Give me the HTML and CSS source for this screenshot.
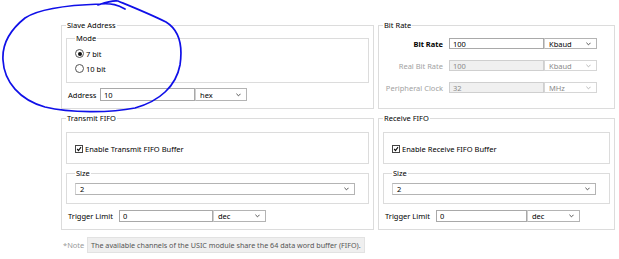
FILE: index.html
```html
<!DOCTYPE html>
<html lang="en">
<head>
    <meta charset="UTF-8">
    <title>USIC I2C Configuration</title>
    <link rel="stylesheet" href="styles.css">
</head>
<body>
    <div class="config">
        <!-- Slave address -->
        <fieldset class="group">
            <legend>Slave Address</legend>
            <fieldset class="mode">
                <legend>Mode</legend>
                <label class="radio-row"><span class="radio checked"></span>7 bit</label>
                <label class="radio-row"><span class="radio"></span>10 bit</label>
            </fieldset>
            <div class="row address-row">
                <span class="label address-label">Address</span>
                <input class="text-input address-input" type="text" value="10">
                <div class="select address-select"><span>hex</span><svg class="chevron" viewBox="0 0 6 4"><path d="M0.5 0.5 L3 3 L5.5 0.5"/></svg></div>
            </div>
        </fieldset>

        <!-- Bit rate -->
        <fieldset class="group">
            <legend>Bit Rate</legend>
            <div class="rate-rows">
                <div class="row">
                    <span class="label rate-label strong">Bit Rate</span>
                    <input class="text-input rate-input" type="text" value="100">
                    <div class="select rate-select"><span>Kbaud</span><svg class="chevron" viewBox="0 0 6 4"><path d="M0.5 0.5 L3 3 L5.5 0.5"/></svg></div>
                </div>
                <div class="row disabled">
                    <span class="label rate-label">Real Bit Rate</span>
                    <input class="text-input rate-input" type="text" value="100" disabled>
                    <div class="select rate-select"><span>Kbaud</span><svg class="chevron" viewBox="0 0 6 4"><path d="M0.5 0.5 L3 3 L5.5 0.5"/></svg></div>
                </div>
                <div class="row disabled">
                    <span class="label rate-label">Peripheral Clock</span>
                    <input class="text-input rate-input" type="text" value="32" disabled>
                    <div class="select rate-select"><span>MHz</span><svg class="chevron" viewBox="0 0 6 4"><path d="M0.5 0.5 L3 3 L5.5 0.5"/></svg></div>
                </div>
            </div>
        </fieldset>

        <!-- Transmit FIFO -->
        <fieldset class="group">
            <legend>Transmit FIFO</legend>
            <div class="check-box">
                <label class="check-row"><span class="checkbox"><svg viewBox="0 0 8 8"><path d="M1.5 4 L3.3 6 L6.7 1.6"/></svg></span>Enable Transmit FIFO Buffer</label>
            </div>
            <fieldset class="size">
                <legend>Size</legend>
                <div class="select size-select"><span>2</span><svg class="chevron" viewBox="0 0 6 4"><path d="M0.5 0.5 L3 3 L5.5 0.5"/></svg></div>
            </fieldset>
            <div class="row trigger-row">
                <span class="label trigger-label">Trigger Limit</span>
                <input class="text-input trigger-input" type="text" value="0">
                <div class="select trigger-select"><span>dec</span><svg class="chevron" viewBox="0 0 6 4"><path d="M0.5 0.5 L3 3 L5.5 0.5"/></svg></div>
            </div>
        </fieldset>

        <!-- Receive FIFO -->
        <fieldset class="group">
            <legend>Receive FIFO</legend>
            <div class="check-box">
                <label class="check-row"><span class="checkbox"><svg viewBox="0 0 8 8"><path d="M1.5 4 L3.3 6 L6.7 1.6"/></svg></span>Enable Receive FIFO Buffer</label>
            </div>
            <fieldset class="size">
                <legend>Size</legend>
                <div class="select size-select"><span>2</span><svg class="chevron" viewBox="0 0 6 4"><path d="M0.5 0.5 L3 3 L5.5 0.5"/></svg></div>
            </fieldset>
            <div class="row trigger-row">
                <span class="label trigger-label">Trigger Limit</span>
                <input class="text-input trigger-input rx" type="text" value="0">
                <div class="select trigger-select"><span>dec</span><svg class="chevron" viewBox="0 0 6 4"><path d="M0.5 0.5 L3 3 L5.5 0.5"/></svg></div>
            </div>
        </fieldset>

        <div class="note">
            <span class="note-label">*Note</span>
            <span class="note-text">The available channels of the USIC module share the 64 data word buffer (FIFO).</span>
        </div>
    </div>

    <!-- hand drawn marker loop over the slave address group -->
    <svg class="marker" width="200" height="120" viewBox="0 0 200 120">
        <path d="M125 9 C118 5 112 3 100 4 C70 5 40 8 25 18 C10 30 2 45 3 60 C4 82 20 100 45 107 C70 113 110 113 135 108 C160 101 176 86 180 65 C183 45 179 30 166 22 C150 14 135 8 118 1 C112 0 104 3 98 5"/>
    </svg>
</body>
</html>
```

FILE: styles.css
```css
body {
    margin: 0;
    background-color: #fff;
    font-family: 'Noto Sans', sans-serif;
    font-size: 7.5px;
    color: #000;
}
.config {
    display: grid;
    grid-template-columns: 313px 237px;
    column-gap: 4px;
    row-gap: 4px;
    padding: 20px 0 0 61px;
}
fieldset {
    margin: 0;
    min-width: 0;
    border: 1px solid #dcdcdc;
    padding: 0 4px 7px 4px;
}
legend {
    padding: 0 1px;
    line-height: 10px;
}
.mode {
    margin-top: 3px;
    padding: 3px 4px 6px 8px;
}
.radio-row, .check-row {
    display: flex;
    align-items: center;
    height: 15px;
}
.radio {
    width: 7px;
    height: 7px;
    border: 1px solid #555;
    border-radius: 50%;
    margin-right: 2px;
    position: relative;
    background-color: #fff;
}
.radio.checked::after {
    content: "";
    position: absolute;
    left: 1.5px;
    top: 1.5px;
    width: 4px;
    height: 4px;
    border-radius: 50%;
    background-color: #111;
}
.row {
    display: flex;
    align-items: center;
    height: 12px;
}
.label {
    flex: none;
}
.address-row {
    margin-top: 5px;
    height: 13px;
}
.address-label {
    width: 32px;
    margin-left: 2px;
}
.text-input {
    box-sizing: border-box;
    height: 100%;
    margin: 0;
    padding: 0 3px;
    border: 1px solid #a9a9a9;
    font-family: inherit;
    font-size: 7.5px;
    color: #000;
    background-color: #fff;
    outline: none;
}
.address-input {
    width: 95px;
}
.select {
    box-sizing: border-box;
    height: 100%;
    display: flex;
    align-items: center;
    justify-content: space-between;
    padding: 0 5px 0 4px;
    border: 1px solid #b4b4b4;
    border-left-color: #d0d0d0;
    background-color: #fff;
}
.chevron {
    width: 5px;
    height: 4px;
    fill: none;
    stroke: #444;
    stroke-width: 1.1;
}
.address-select {
    width: 52px;
}
.rate-rows {
    display: flex;
    flex-direction: column;
    gap: 11px;
    margin-top: 8px;
}
.rate-rows .row {
    height: 11px;
}
.rate-label {
    width: 60px;
    margin-right: 6px;
    text-align: right;
}
.strong {
    font-weight: bold;
}
.rate-input {
    width: 95px;
}
.rate-select {
    width: 53px;
}
.disabled {
    color: #a2a2a2;
}
.disabled .text-input {
    background-color: #f0f0f0;
    border-color: #cfcfcf;
    color: #8a8a8a;
}
.disabled .select {
    border-color: #d6d6d6;
    color: #8a8a8a;
}
.disabled .chevron {
    stroke: #b0b0b0;
}
.check-box {
    margin-top: 9px;
    height: 28px;
    border: 1px solid #dcdcdc;
    padding: 2px 8px 0;
    display: flex;
    align-items: center;
}
.checkbox {
    box-sizing: border-box;
    width: 8px;
    height: 8px;
    border: 1px solid #444;
    margin-right: 2px;
    display: flex;
    background-color: #fff;
}
.checkbox svg {
    width: 6px;
    height: 6px;
    fill: none;
    stroke: #111;
    stroke-width: 1.5;
}
.size {
    margin-top: 4px;
    padding: 5px 13px 8px 8px;
}
.size-select {
    height: 12px;
}
.trigger-row {
    margin-top: 6px;
}
.trigger-label {
    width: 51px;
    margin-left: 2px;
}
.trigger-input {
    width: 94px;
}
.trigger-input.rx {
    width: 91px;
}
.trigger-select {
    width: 53px;
}
.note {
    grid-column: 1 / span 2;
    display: flex;
    align-items: center;
    margin-top: 3px;
    margin-left: 2px;
}
.note-label {
    width: 24px;
    color: #9a9a9a;
}
.note-text {
    background-color: #efefef;
    border: 1px solid #e2e2e2;
    padding: 2px 3px;
    line-height: 10px;
    font-size: 7.2px;
    color: #555;
}
.marker {
    position: absolute;
    left: 0;
    top: 0;
    fill: none;
    stroke: #1010e8;
    stroke-width: 1.7;
    stroke-linecap: round;
}
```
